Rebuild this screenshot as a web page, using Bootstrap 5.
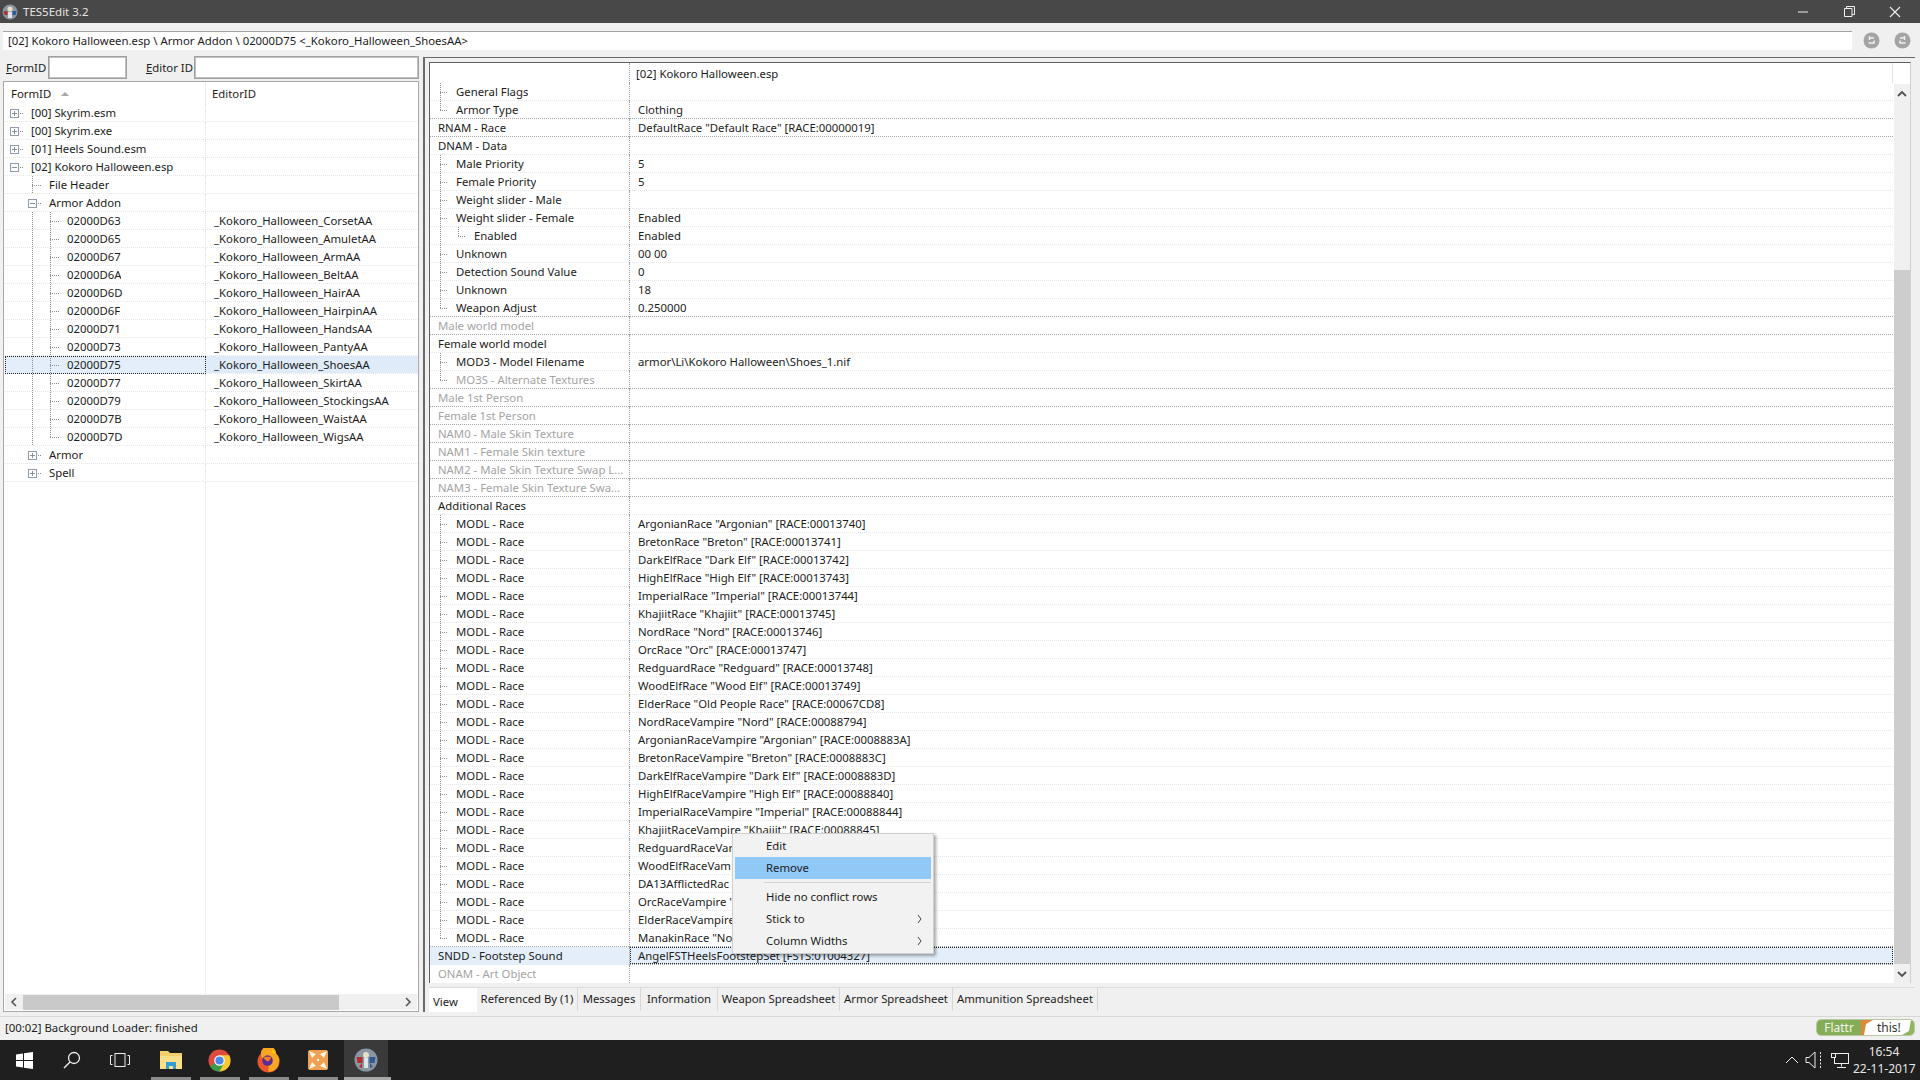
<!DOCTYPE html>
<html lang="en"><head><meta charset="utf-8"><title>TES5Edit 3.2</title>
<link rel="stylesheet" href="https://cdn.jsdelivr.net/npm/bootstrap@5.3.0/dist/css/bootstrap.min.css">
<style>
html,body{height:1080px;overflow:hidden}
body{width:1920px;background:#f0f0f0;color:#1c1c1c;font:11.35px/18px "Noto Sans","Open Sans",sans-serif}
.ttl{height:23px;background:#484848;color:#e4e4e4;padding:0 2px;}
.ttl .nmx{margin-left:5px;font-size:11.5px}
.wb{width:46px;height:23px;display:flex;align-items:center;justify-content:center}
.crumbs{height:19px;margin:8px 0 0 3px;}
.crumbbox{width:1849px;background:#fff;border-top:1px solid #a3a3a3;padding-left:5px;line-height:18px}
.nv{width:31px;display:flex;justify-content:center;align-items:center}
.main{height:956px;margin-top:6px;padding-left:3px;padding-right:5px}
.lft{width:416px}
.flt{height:25px;padding-left:3px}
.flt label{margin:0;white-space:nowrap;line-height:24px}
.lb1{width:42px}
.lb2{width:48px}
.flt .u{text-decoration:underline}
.flt .form-control{height:23px;padding:0 3px;border-radius:0;border:1px solid #a0a0a0;outline:1px solid #c0c0c0;outline-offset:-2px;font-size:11.35px;background:#fff}
.w1{width:79px;flex:none;margin:0 19px 0 0}
.w2{width:225px;flex:none}
.trp{height:931px;background:#fff;border:1px solid #a8a8a8}
.hd{height:22px;padding-left:1px;flex:none}
.hd1{width:201px;padding-left:6px;border-right:1px solid #ececec;line-height:23px}
.hd2{padding-left:6px;line-height:23px}
.sortm{display:inline-block;margin-left:10px;vertical-align:2px;border-left:4px solid transparent;border-right:4px solid transparent;border-bottom:4px solid #a8a8a8}
.rw{height:18px;flex:none;display:flex;border-bottom:1px dotted #e6e6e6;white-space:nowrap}
.rw.dk{border-bottom-color:#a6a6a6}
.rw.none{border-bottom:0}
.trbody{padding-left:1px}
.tn{width:201px;display:flex;border-right:1px dotted #e0e0e0;height:18px;flex:none}
.tv{padding-left:8px;flex:1 1 auto;min-width:0}
.filler{flex:1 1 auto;display:flex;padding-left:1px}
.filler>div{width:200px;border-right:1px dotted #e4e4e4}
.gi{width:18px;height:18px;flex:none;display:block;position:relative;background-repeat:no-repeat}
.gv,.gt,.gl,.gp,.gm{--d:repeating-linear-gradient(to bottom,#8c8c8c 0 1px,transparent 1px 2px);--h:repeating-linear-gradient(to right,#8c8c8c 0 1px,transparent 1px 2px)}
.trbody .gv{background-image:var(--d);background-size:1px 18px;background-position:9px 0}
.trbody .gt{background-image:var(--d),var(--h);background-size:1px 18px,9px 1px;background-position:9px 0,9px 9px}
.trbody .gl{background-image:var(--d),var(--h);background-size:1px 9px,9px 1px;background-position:9px 0,9px 9px}
.gp,.gm{background-image:var(--h);background-size:9px 1px;background-position:9px 9px}
.gp::before,.gm::before{content:"";position:absolute;left:5px;top:5px;width:9px;height:9px;border:1px solid #8f9cad;background:linear-gradient(#8a8f96,#8a8f96) center/5px 1px no-repeat,#fff}
.gp::after{content:"";position:absolute;left:9px;top:7px;width:1px;height:5px;background:#8a8f96}
.rpb .gv{background-image:var(--d);background-size:1px 18px;background-position:10px 0}
.rpb .gt{background-image:var(--d),var(--h);background-size:1px 18px,8px 1px;background-position:10px 0,10px 9px}
.rpb .gl{background-image:var(--d),var(--h);background-size:1px 9px,8px 1px;background-position:10px 0,10px 9px}
.tx{padding-left:8px;overflow:hidden}
.rpo{width:1492px;height:955px;border-top:1px solid #6a6a6a;border-left:2px solid #6a6a6a;margin-left:4px;margin-top:1px;padding:4px 0 0 4px;position:relative}
.rpi{height:921px;flex:none;background:#fff;border-top:1px solid #606060;border-left:1px solid #606060;border-right:1px solid #cfcfcf;width:1482px}
.rpb{width:1463px;flex:none}
.rpb .tn{width:200px;border-right:1px dotted #a0a0a0}
.rpb .rw.top{height:20px;border-bottom:0;border-right:1px solid #e2e2e2}
.rpb .rw.top .tn{height:20px}
.rpb .rw.top .tv{padding:1px 0 0 6px;line-height:20px}
.dis{color:#a4a4a4}
.sel .tn{background:#e3eefa}
.sel .tv{background:#e3eefa;outline:1px dotted #222;outline-offset:-1px}
.trbody .sel .tn{outline:1px dotted #222;outline-offset:-1px;background:#e3eefa}
.trbody .sel .tv{outline:0;background:#dfebf8}
.rsb{width:16px;margin-top:21px;background:#f0f0f0;flex:none;display:flex;flex-direction:column;margin-left:1px}
.sba{height:19px;flex:none;display:flex;align-items:center;justify-content:center}
.rsb .sp{height:167px;flex:none}
.rsb .th{flex:1 1 auto;background:#cdcdcd}
.hsb{height:16px;flex:none;margin:0 1px 1px 1px;background:#f0f0f0;display:flex;align-items:center}
.hsb .sba{width:18px;height:16px}
.hsb .th{height:15px;width:316px;background:#c9c9c9}
.hsb .rest{flex:1 1 auto}
.tabs.nav{height:25px;margin-top:4px;flex-wrap:nowrap;border-bottom:0;font-size:11.35px;border-top:1px solid #dcdcdc;width:1486px}
.tabs .nav-link{height:23px;padding:0;border:0;border-radius:0;border-right:1px solid #d8d8d8;color:#1c1c1c;background:#f0f0f0;text-align:center;margin:0;line-height:22px}
.tabs .nav-link.active{background:#fff;color:#1c1c1c;height:24px;line-height:27px;border-right:0;text-align:left;padding-left:4px}
.tab0{width:48px}.tab1{width:101px}.tab2{width:63px}.tab3{width:77px}.tab4{width:122px}.tab5{width:113px}.tab6{width:145px}
.st{height:28px;padding-top:4px;flex:none}
.stin{border-top:1px solid #d8d8d8;height:24px;padding-left:5px;padding-right:5px;line-height:22px}
.fl{width:99px;height:17px;margin-top:2px;border-radius:5px;overflow:hidden;border:1px solid #b9c8a4;font-size:12px;line-height:15px}
.fla{width:44px;background:#84ad55;color:#f1f6e9;text-align:center;flex:none}
.flb{flex:1 1 auto;background:#fff;color:#333;padding-left:16px;position:relative}
.flb svg{position:absolute;left:0;top:0}
.flb svg.flg{left:auto;right:0}
.tb{height:40px;background:#1f1f1f;color:#e6e6e6;flex:none}
.tbi{width:48px;height:40px;display:flex;align-items:center;justify-content:center;flex:none}
.app{width:49px;height:40px;display:flex;align-items:center;justify-content:center;flex:none;position:relative}
.app::after{content:"";position:absolute;left:5px;right:4px;bottom:0;height:3px;background:#8b8b8b}
.app.on{background:#3a3a3a;width:44px;margin-left:2px;padding-right:0}
.app.on::after{left:0;right:-3px;background:#a8a8a8}
.a1{margin-left:2px}
.y1{width:18px}.y2,.y3{width:26px}
.clk{width:62px;margin-right:5px;text-align:center;font-size:12px;line-height:17px;padding-top:3px;white-space:nowrap}
.ctx.dropdown-menu{position:absolute;left:307px;top:775px;width:202px;height:121px;min-width:0;margin:0;padding:1px 2px;border:1px solid #cfcfcf;border-radius:0;background:#f2f2f2;font-size:11.35px;color:#1c1c1c;box-shadow:2px 2px 3px rgba(0,0,0,.35);display:block}
.ctx .dropdown-item{height:22px;line-height:22px;padding:0 0 0 31px;color:#1c1c1c;font-size:11.35px;position:relative}
.ctx .dropdown-item.active{background:#90c8f6;color:#1c1c1c}
.ctx .dropdown-divider{margin:3px 0 3px 29px;border-color:#d4d4d4;opacity:1;height:0}
.arr{position:absolute;right:9px;top:7px}
</style></head>
<body class="d-flex flex-column">
<div class="ttl d-flex align-items-center flex-shrink-0">
<svg width="16" height="16" viewBox="0 0 16 16"><circle cx="8" cy="8" r="7.5" fill="#8a97a3"/><circle cx="8" cy="5" r="2.5" fill="#e8e0c8"/><path d="M1.5 7h4v4h-3z" fill="#b03030"/><path d="M10.5 7h4l-1 4h-3z" fill="#2b5a96"/><path d="M6 8h4v6H6z" fill="#dfe3e8"/></svg>
<span class="nmx flex-grow-1">TES5Edit 3.2</span>
<span class="wb"><svg width="11" height="2"><path d="M0 1h10" stroke="#eee"/></svg></span>
<span class="wb"><svg width="11" height="11"><path d="M.5 2.5h7.5v8H.5zM2.5 2.500v-2h8v8H8" fill="none" stroke="#eee"/></svg></span>
<span class="wb"><svg width="12" height="12"><path d="M1 1l10 10M11 1L1 11" stroke="#eee" stroke-width="1.100"/></svg></span>
</div>
<div class="crumbs d-flex flex-shrink-0">
<div class="crumbbox">[02] Kokoro Halloween.esp \ Armor Addon \ 02000D75 &lt;_Kokoro_Halloween_ShoesAA&gt;</div>
<span class="nv ms-1"><svg width="17" height="17" viewBox="0 0 17 17"><circle cx="8.500" cy="8.500" r="8" fill="#a4a4a4"/><path d="M11 6H6.500M6.500 4v4M5.500 11h5.500v-2.500" fill="none" stroke="#f0f0f0" stroke-width="1.500"/></svg></span>
<span class="nv"><svg width="17" height="17" viewBox="0 0 17 17"><circle cx="8.500" cy="8.500" r="8" fill="#a4a4a4"/><path d="M6 6h4.500M10.500 4v4M11.500 11H6V8.500" fill="none" stroke="#f0f0f0" stroke-width="1.500"/></svg></span>
</div>
<div class="main d-flex flex-shrink-0 position-relative">
<div class="lft d-flex flex-column flex-shrink-0">
<div class="flt d-flex">
<label class="lb1"><span class="u">F</span>ormID</label><input class="form-control w1" aria-label="FormID">
<label class="lb2"><span class="u">E</span>ditor ID</label><input class="form-control w2" aria-label="Editor ID">
</div>
<div class="trp d-flex flex-column">
<div class="hd d-flex"><div class="hd1">FormID<i class="sortm"></i></div><div class="hd2">EditorID</div></div>
<div class="trbody d-flex flex-column flex-grow-1">
<div class="rw"><div class="tn"><i class="gi gp"></i><span class="tx">[00] Skyrim.esm</span></div><div class="tv"></div></div>
<div class="rw"><div class="tn"><i class="gi gp"></i><span class="tx">[00] Skyrim.exe</span></div><div class="tv"></div></div>
<div class="rw"><div class="tn"><i class="gi gp"></i><span class="tx">[01] Heels Sound.esm</span></div><div class="tv"></div></div>
<div class="rw"><div class="tn"><i class="gi gm"></i><span class="tx">[02] Kokoro Halloween.esp</span></div><div class="tv"></div></div>
<div class="rw"><div class="tn"><i class="gi"></i><i class="gi gt"></i><span class="tx">File Header</span></div><div class="tv"></div></div>
<div class="rw"><div class="tn"><i class="gi"></i><i class="gi gm"></i><span class="tx">Armor Addon</span></div><div class="tv"></div></div>
<div class="rw"><div class="tn"><i class="gi"></i><i class="gi gv"></i><i class="gi gt"></i><span class="tx">02000D63</span></div><div class="tv">_Kokoro_Halloween_CorsetAA</div></div>
<div class="rw"><div class="tn"><i class="gi"></i><i class="gi gv"></i><i class="gi gt"></i><span class="tx">02000D65</span></div><div class="tv">_Kokoro_Halloween_AmuletAA</div></div>
<div class="rw"><div class="tn"><i class="gi"></i><i class="gi gv"></i><i class="gi gt"></i><span class="tx">02000D67</span></div><div class="tv">_Kokoro_Halloween_ArmAA</div></div>
<div class="rw"><div class="tn"><i class="gi"></i><i class="gi gv"></i><i class="gi gt"></i><span class="tx">02000D6A</span></div><div class="tv">_Kokoro_Halloween_BeltAA</div></div>
<div class="rw"><div class="tn"><i class="gi"></i><i class="gi gv"></i><i class="gi gt"></i><span class="tx">02000D6D</span></div><div class="tv">_Kokoro_Halloween_HairAA</div></div>
<div class="rw"><div class="tn"><i class="gi"></i><i class="gi gv"></i><i class="gi gt"></i><span class="tx">02000D6F</span></div><div class="tv">_Kokoro_Halloween_HairpinAA</div></div>
<div class="rw"><div class="tn"><i class="gi"></i><i class="gi gv"></i><i class="gi gt"></i><span class="tx">02000D71</span></div><div class="tv">_Kokoro_Halloween_HandsAA</div></div>
<div class="rw"><div class="tn"><i class="gi"></i><i class="gi gv"></i><i class="gi gt"></i><span class="tx">02000D73</span></div><div class="tv">_Kokoro_Halloween_PantyAA</div></div>
<div class="rw sel"><div class="tn"><i class="gi"></i><i class="gi gv"></i><i class="gi gt"></i><span class="tx">02000D75</span></div><div class="tv">_Kokoro_Halloween_ShoesAA</div></div>
<div class="rw"><div class="tn"><i class="gi"></i><i class="gi gv"></i><i class="gi gt"></i><span class="tx">02000D77</span></div><div class="tv">_Kokoro_Halloween_SkirtAA</div></div>
<div class="rw"><div class="tn"><i class="gi"></i><i class="gi gv"></i><i class="gi gt"></i><span class="tx">02000D79</span></div><div class="tv">_Kokoro_Halloween_StockingsAA</div></div>
<div class="rw"><div class="tn"><i class="gi"></i><i class="gi gv"></i><i class="gi gt"></i><span class="tx">02000D7B</span></div><div class="tv">_Kokoro_Halloween_WaistAA</div></div>
<div class="rw"><div class="tn"><i class="gi"></i><i class="gi gv"></i><i class="gi gl"></i><span class="tx">02000D7D</span></div><div class="tv">_Kokoro_Halloween_WigsAA</div></div>
<div class="rw"><div class="tn"><i class="gi"></i><i class="gi gp"></i><span class="tx">Armor</span></div><div class="tv"></div></div>
<div class="rw"><div class="tn"><i class="gi"></i><i class="gi gp"></i><span class="tx">Spell</span></div><div class="tv"></div></div>
<div class="filler"><div></div></div>
</div>
<div class="hsb"><span class="sba"><svg width="8" height="10"><path d="M6 1L2 5l4 4" fill="none" stroke="#555" stroke-width="1.600"/></svg></span><span class="th"></span><span class="rest"></span><span class="sba"><svg width="8" height="10"><path d="M2 1l4 4-4 4" fill="none" stroke="#555" stroke-width="1.600"/></svg></span></div>
</div>
</div>
<div class="rpo d-flex flex-column flex-shrink-0">
<div class="rpi d-flex">
<div class="rpb">
<div class="rw top"><div class="tn"></div><div class="tv">[02] Kokoro Halloween.esp</div></div>
<div class="rw"><div class="tn"><i class="gi gt"></i><span class="tx">General Flags</span></div><div class="tv"></div></div>
<div class="rw dk"><div class="tn"><i class="gi gl"></i><span class="tx">Armor Type</span></div><div class="tv">Clothing</div></div>
<div class="rw dk"><div class="tn"><span class="tx">RNAM - Race</span></div><div class="tv">DefaultRace "Default Race" [RACE:00000019]</div></div>
<div class="rw"><div class="tn"><span class="tx">DNAM - Data</span></div><div class="tv"></div></div>
<div class="rw"><div class="tn"><i class="gi gt"></i><span class="tx">Male Priority</span></div><div class="tv">5</div></div>
<div class="rw"><div class="tn"><i class="gi gt"></i><span class="tx">Female Priority</span></div><div class="tv">5</div></div>
<div class="rw"><div class="tn"><i class="gi gt"></i><span class="tx">Weight slider - Male</span></div><div class="tv"></div></div>
<div class="rw"><div class="tn"><i class="gi gt"></i><span class="tx">Weight slider - Female</span></div><div class="tv">Enabled</div></div>
<div class="rw"><div class="tn"><i class="gi gv"></i><i class="gi gl"></i><span class="tx">Enabled</span></div><div class="tv">Enabled</div></div>
<div class="rw"><div class="tn"><i class="gi gt"></i><span class="tx">Unknown</span></div><div class="tv">00 00</div></div>
<div class="rw"><div class="tn"><i class="gi gt"></i><span class="tx">Detection Sound Value</span></div><div class="tv">0</div></div>
<div class="rw"><div class="tn"><i class="gi gt"></i><span class="tx">Unknown</span></div><div class="tv">18</div></div>
<div class="rw dk"><div class="tn"><i class="gi gl"></i><span class="tx">Weapon Adjust</span></div><div class="tv">0.250000</div></div>
<div class="rw dk"><div class="tn dis"><span class="tx">Male world model</span></div><div class="tv"></div></div>
<div class="rw"><div class="tn"><span class="tx">Female world model</span></div><div class="tv"></div></div>
<div class="rw"><div class="tn"><i class="gi gt"></i><span class="tx">MOD3 - Model Filename</span></div><div class="tv">armor\Li\Kokoro Halloween\Shoes_1.nif</div></div>
<div class="rw dk"><div class="tn dis"><i class="gi gl"></i><span class="tx">MO3S - Alternate Textures</span></div><div class="tv"></div></div>
<div class="rw dk"><div class="tn dis"><span class="tx">Male 1st Person</span></div><div class="tv"></div></div>
<div class="rw dk"><div class="tn dis"><span class="tx">Female 1st Person</span></div><div class="tv"></div></div>
<div class="rw dk"><div class="tn dis"><span class="tx">NAM0 - Male Skin Texture</span></div><div class="tv"></div></div>
<div class="rw dk"><div class="tn dis"><span class="tx">NAM1 - Female Skin texture</span></div><div class="tv"></div></div>
<div class="rw dk"><div class="tn dis"><span class="tx">NAM2 - Male Skin Texture Swap L...</span></div><div class="tv"></div></div>
<div class="rw dk"><div class="tn dis"><span class="tx">NAM3 - Female Skin Texture Swa...</span></div><div class="tv"></div></div>
<div class="rw"><div class="tn"><span class="tx">Additional Races</span></div><div class="tv"></div></div>
<div class="rw"><div class="tn"><i class="gi gt"></i><span class="tx">MODL - Race</span></div><div class="tv">ArgonianRace "Argonian" [RACE:00013740]</div></div>
<div class="rw"><div class="tn"><i class="gi gt"></i><span class="tx">MODL - Race</span></div><div class="tv">BretonRace "Breton" [RACE:00013741]</div></div>
<div class="rw"><div class="tn"><i class="gi gt"></i><span class="tx">MODL - Race</span></div><div class="tv">DarkElfRace "Dark Elf" [RACE:00013742]</div></div>
<div class="rw"><div class="tn"><i class="gi gt"></i><span class="tx">MODL - Race</span></div><div class="tv">HighElfRace "High Elf" [RACE:00013743]</div></div>
<div class="rw"><div class="tn"><i class="gi gt"></i><span class="tx">MODL - Race</span></div><div class="tv">ImperialRace "Imperial" [RACE:00013744]</div></div>
<div class="rw"><div class="tn"><i class="gi gt"></i><span class="tx">MODL - Race</span></div><div class="tv">KhajiitRace "Khajiit" [RACE:00013745]</div></div>
<div class="rw"><div class="tn"><i class="gi gt"></i><span class="tx">MODL - Race</span></div><div class="tv">NordRace "Nord" [RACE:00013746]</div></div>
<div class="rw"><div class="tn"><i class="gi gt"></i><span class="tx">MODL - Race</span></div><div class="tv">OrcRace "Orc" [RACE:00013747]</div></div>
<div class="rw"><div class="tn"><i class="gi gt"></i><span class="tx">MODL - Race</span></div><div class="tv">RedguardRace "Redguard" [RACE:00013748]</div></div>
<div class="rw"><div class="tn"><i class="gi gt"></i><span class="tx">MODL - Race</span></div><div class="tv">WoodElfRace "Wood Elf" [RACE:00013749]</div></div>
<div class="rw"><div class="tn"><i class="gi gt"></i><span class="tx">MODL - Race</span></div><div class="tv">ElderRace "Old People Race" [RACE:00067CD8]</div></div>
<div class="rw"><div class="tn"><i class="gi gt"></i><span class="tx">MODL - Race</span></div><div class="tv">NordRaceVampire "Nord" [RACE:00088794]</div></div>
<div class="rw"><div class="tn"><i class="gi gt"></i><span class="tx">MODL - Race</span></div><div class="tv">ArgonianRaceVampire "Argonian" [RACE:0008883A]</div></div>
<div class="rw"><div class="tn"><i class="gi gt"></i><span class="tx">MODL - Race</span></div><div class="tv">BretonRaceVampire "Breton" [RACE:0008883C]</div></div>
<div class="rw"><div class="tn"><i class="gi gt"></i><span class="tx">MODL - Race</span></div><div class="tv">DarkElfRaceVampire "Dark Elf" [RACE:0008883D]</div></div>
<div class="rw"><div class="tn"><i class="gi gt"></i><span class="tx">MODL - Race</span></div><div class="tv">HighElfRaceVampire "High Elf" [RACE:00088840]</div></div>
<div class="rw"><div class="tn"><i class="gi gt"></i><span class="tx">MODL - Race</span></div><div class="tv">ImperialRaceVampire "Imperial" [RACE:00088844]</div></div>
<div class="rw"><div class="tn"><i class="gi gt"></i><span class="tx">MODL - Race</span></div><div class="tv">KhajiitRaceVampire "Khajiit" [RACE:00088845]</div></div>
<div class="rw"><div class="tn"><i class="gi gt"></i><span class="tx">MODL - Race</span></div><div class="tv">RedguardRaceVar</div></div>
<div class="rw"><div class="tn"><i class="gi gt"></i><span class="tx">MODL - Race</span></div><div class="tv">WoodElfRaceVam</div></div>
<div class="rw"><div class="tn"><i class="gi gt"></i><span class="tx">MODL - Race</span></div><div class="tv">DA13AfflictedRac</div></div>
<div class="rw"><div class="tn"><i class="gi gt"></i><span class="tx">MODL - Race</span></div><div class="tv">OrcRaceVampire '</div></div>
<div class="rw"><div class="tn"><i class="gi gt"></i><span class="tx">MODL - Race</span></div><div class="tv">ElderRaceVampire</div></div>
<div class="rw dk"><div class="tn"><i class="gi gl"></i><span class="tx">MODL - Race</span></div><div class="tv">ManakinRace "No</div></div>
<div class="rw dk sel"><div class="tn"><span class="tx">SNDD - Footstep Sound</span></div><div class="tv">AngelFSTHeelsFootstepSet [FSTS:01004327]</div></div>
<div class="rw none"><div class="tn dis"><span class="tx">ONAM - Art Object</span></div><div class="tv"></div></div>
</div>
<div class="rsb">
<span class="sba"><svg width="10" height="8"><path d="M1 6l4-4 4 4" fill="none" stroke="#505050" stroke-width="1.800"/></svg></span>
<span class="sp"></span><span class="th"></span>
<span class="sba"><svg width="10" height="8"><path d="M1 2l4 4 4-4" fill="none" stroke="#505050" stroke-width="1.800"/></svg></span>
</div>
</div>
<ul class="nav nav-tabs tabs">
<li class="nav-item"><a class="nav-link active tab0" href="#">View</a></li>
<li class="nav-item"><a class="nav-link tab1" href="#">Referenced By (1)</a></li>
<li class="nav-item"><a class="nav-link tab2" href="#">Messages</a></li>
<li class="nav-item"><a class="nav-link tab3" href="#">Information</a></li>
<li class="nav-item"><a class="nav-link tab4" href="#">Weapon Spreadsheet</a></li>
<li class="nav-item"><a class="nav-link tab5" href="#">Armor Spreadsheet</a></li>
<li class="nav-item"><a class="nav-link tab6" href="#">Ammunition Spreadsheet</a></li>
</ul>
<div class="dropdown-menu ctx">
<a class="dropdown-item" href="#">Edit</a>
<a class="dropdown-item active" href="#">Remove</a>
<hr class="dropdown-divider">
<a class="dropdown-item" href="#">Hide no conflict rows</a>
<a class="dropdown-item" href="#">Stick to<svg class="arr" width="5" height="8"><path d="M1 0l3 4-3 4" fill="none" stroke="#444"/></svg></a>
<a class="dropdown-item" href="#">Column Widths<svg class="arr" width="5" height="8"><path d="M1 0l3 4-3 4" fill="none" stroke="#444"/></svg></a>
</div>
</div>
</div>
<div class="st">
<div class="stin d-flex justify-content-between">
<span>[00:02] Background Loader: finished</span>
<div class="fl d-flex"><span class="fla">Flattr</span><span class="flb"><svg width="12" height="15"><path d="M0 0h12L5 4 3 15H0z" fill="#e0873a"/></svg>this!<svg class="flg" width="12" height="15"><path d="M12 15H0l7-4 2-11h3z" fill="#8fb65f"/></svg></span></div>
</div>
</div>
<div class="tb d-flex align-items-stretch">
<span class="tbi"><svg width="17" height="17" viewBox="0 0 17 17"><path d="M0 2.500L7 1.500V8H0zM8 1.300L17 0v8H8zM0 9h7v6.500L0 14.500zM8 9h9v8l-9-1.300z" fill="#fff"/></svg></span>
<span class="tbi"><svg width="18" height="18" viewBox="0 0 18 18"><circle cx="11" cy="7" r="5.500" fill="none" stroke="#eee" stroke-width="1.300"/><path d="M7 11l-6 6" stroke="#eee" stroke-width="1.500"/></svg></span>
<span class="tbi"><svg width="20" height="14" viewBox="0 0 20 14"><rect x="5" y=".5" width="10" height="13" fill="none" stroke="#eee"/><path d="M2.500 2.500H.5v9h2M17.500 2.500h2v9h-2" fill="none" stroke="#eee"/></svg></span>
<span class="app a1"><svg width="22" height="20" viewBox="0 0 22 20"><path d="M0 1h8l2 2h12v16H0z" fill="#f5cf6a"/><path d="M0 6h22v13H0z" fill="#fbe08c"/><path d="M6 12h10v7h-3v-3H9v3H6z" fill="#2f9fd8"/></svg></span>
<span class="app"><svg width="23" height="23" viewBox="0 0 24 24"><circle cx="12" cy="12" r="11.500" fill="#dd4b3e"/><path d="M12 12L2.100 18A11.500 11.500 0 0 0 12 23.500 11.500 11.500 0 0 0 22 17z" fill="#3a9b4a"/><path d="M12 6.500h10.100A11.500 11.500 0 0 1 12 23.500L17 14z" fill="#f9c82f"/><circle cx="12" cy="12" r="5.500" fill="#fff"/><circle cx="12" cy="12" r="4.300" fill="#4a89e8"/></svg></span>
<span class="app"><svg width="23" height="25" viewBox="0 0 24 26"><circle cx="12" cy="14" r="11.500" fill="#e8562a"/><path d="M12 14a8 8 0 1 1 8-8c3 3 4 6 3 8a11 11 0 0 1-11 11z" fill="#f6a623"/><path d="M16 1c2 2 3 3 3 5l-4-1z" fill="#ffcb00"/><circle cx="11" cy="13" r="5.500" fill="#5b2b9a"/><path d="M7 9h8l-2 4-2 1-3-2z" fill="#f6811e"/></svg></span>
<span class="app"><svg width="20" height="20" viewBox="0 0 20 20"><rect width="20" height="20" rx="2" fill="#f0a050"/><path d="M1 1l7 3-4 4zM19 1l-3 7-4-4zM1 19l3-7 4 4zM19 19l-7-3 4-4z" fill="#fff6e6"/><path d="M9 9h2v2H9z" fill="#fff"/></svg></span>
<span class="app on"><svg width="24" height="24" viewBox="0 0 24 24"><circle cx="12" cy="12" r="11.500" fill="#8a97a3"/><circle cx="12" cy="7" r="3" fill="#e8e0c8"/><path d="M2.500 9h6v6h-5zM8 15l-3 4 3 1z" fill="#b03030"/><path d="M15.500 9h6l-1 6h-5zM16 15l3 4-3 1z" fill="#2b5a96"/><path d="M10 10h4v10h-4z" fill="#dfe3e8"/></svg></span>
<span class="flex-grow-1"></span>
<span class="tbi y1"><svg width="14" height="8"><path d="M1 7l6-6 6 6" fill="none" stroke="#eee"/></svg></span>
<span class="tbi y2"><svg width="18" height="18" viewBox="0 0 18 18"><path d="M1 6.500h3L10 1v16L4 11.500H1z" fill="none" stroke="#eee"/><path d="M15.500 1v16" stroke="#eee" stroke-dasharray="2 1.500"/></svg></span>
<span class="tbi y3"><svg width="18" height="15" viewBox="0 0 18 15"><rect x="3.500" y=".5" width="14" height="10" fill="none" stroke="#eee"/><rect x=".5" y=".5" width="4" height="4" fill="#1f1f1f" stroke="#eee"/><path d="M10.500 10.500v3M6 14.500h9" stroke="#eee"/></svg></span>
<div class="clk">16:54<br>22-11-2017</div>
</div>
</body></html>
